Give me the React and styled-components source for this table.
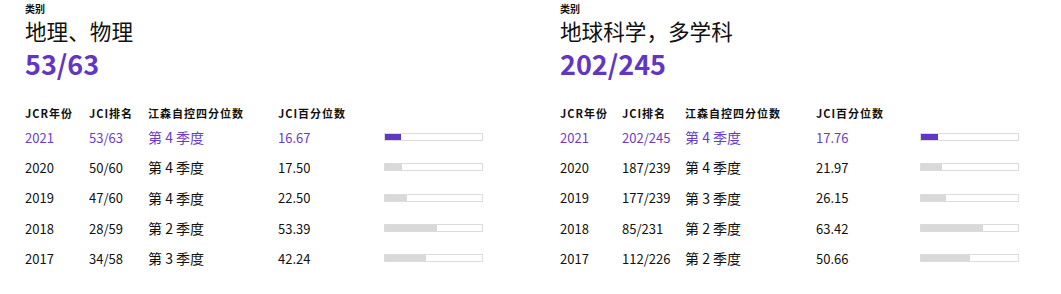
import React from "react";
import styled, { createGlobalStyle } from "styled-components";

const Global = createGlobalStyle`
  html, body { margin: 0; padding: 0; background: #fff; }
  body { font-family: "Noto Sans CJK SC", "Noto Sans", sans-serif; color: #111; }
`;

const Page = styled.div`
  display: grid;
  grid-template-columns: 535px 1fr;
  padding: 3px 0 0 25px;
`;

const Panel = styled.section`
  display: flex;
  flex-direction: column;
`;

const Label = styled.div`
  font-size: 10px;
  line-height: 12px;
  font-weight: 700;
`;

const Title = styled.div`
  font-size: 21.6px;
  line-height: 28px;
  margin-top: 2px;
`;

const Big = styled.div`
  font-size: 27px;
  line-height: 34px;
  font-weight: 700;
  color: #6236c4;
  margin-top: 2px;
`;

const Table = styled.div`
  display: grid;
  grid-template-columns: ${(p) => p.$cols};
  margin-top: 24px;
  align-items: center;
`;

const Head = styled.div`
  font-size: 11px;
  font-weight: 700;
  letter-spacing: 1px;
  line-height: 16px;
  height: 17px;
  white-space: nowrap;
`;

const Cell = styled.div`
  height: 30.3px;
  display: flex;
  align-items: center;
  font-size: ${(p) => (p.$big ? "14px" : "13px")};
  color: ${(p) => (p.$hl ? "#6a3cc8" : "#111")};
  white-space: nowrap;
`;

const Bar = styled.div`
  width: 97px;
  height: 6px;
  border: 1px solid #dcdcdc;
  display: flex;
`;

const Fill = styled.div`
  height: 100%;
  background: ${(p) => (p.$hl ? "#6236c4" : "#d9d9d9")};
`;

const panels = [
  {
    title: "地理、物理",
    big: "53/63",
    cols: "64px 59px 130px 106px 100px",
    rows: [
      ["2021", "53/63", "4", "16.67"],
      ["2020", "50/60", "4", "17.50"],
      ["2019", "47/60", "4", "22.50"],
      ["2018", "28/59", "2", "53.39"],
      ["2017", "34/58", "3", "42.24"],
    ],
  },
  {
    title: "地球科学，多学科",
    big: "202/245",
    cols: "62px 63px 131px 104px 100px",
    rows: [
      ["2021", "202/245", "4", "17.76"],
      ["2020", "187/239", "4", "21.97"],
      ["2019", "177/239", "3", "26.15"],
      ["2018", "85/231", "2", "63.42"],
      ["2017", "112/226", "2", "50.66"],
    ],
  },
];

export default function App() {
  return (
    <>
      <Global />
      <Page>
        {panels.map((p) => (
          <Panel key={p.title}>
            <Label>类别</Label>
            <Title>{p.title}</Title>
            <Big>{p.big}</Big>
            <Table $cols={p.cols}>
              <Head>JCR年份</Head>
              <Head>JCI排名</Head>
              <Head>江森自控四分位数</Head>
              <Head>JCI百分位数</Head>
              <Head />
              {p.rows.map((r, i) => {
                const hl = i === 0;
                return (
                  <React.Fragment key={r[0]}>
                    <Cell $hl={hl}>{r[0]}</Cell>
                    <Cell $hl={hl}>{r[1]}</Cell>
                    <Cell $hl={hl} $big>第 {r[2]} 季度</Cell>
                    <Cell $hl={hl}>{r[3]}</Cell>
                    <Cell>
                      <Bar>
                        <Fill $hl={hl} style={{ width: `${r[3]}%` }} />
                      </Bar>
                    </Cell>
                  </React.Fragment>
                );
              })}
            </Table>
          </Panel>
        ))}
      </Page>
    </>
  );
}
